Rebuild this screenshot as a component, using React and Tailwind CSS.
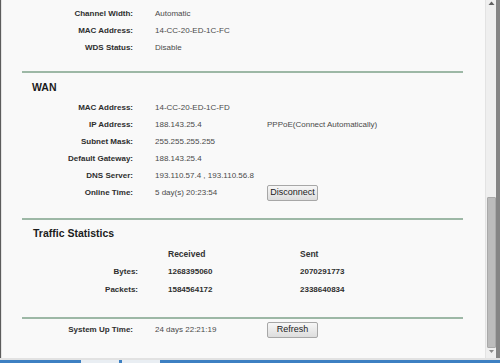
const wireless = [
  ["Channel Width:", "Automatic"],
  ["MAC Address:", "14-CC-20-ED-1C-FC"],
  ["WDS Status:", "Disable"],
];

const wan = [
  ["MAC Address:", "14-CC-20-ED-1C-FD", null],
  ["IP Address:", "188.143.25.4", "PPPoE(Connect Automatically)"],
  ["Subnet Mask:", "255.255.255.255", null],
  ["Default Gateway:", "188.143.25.4", null],
  ["DNS Server:", "193.110.57.4 , 193.110.56.8", null],
  ["Online Time:", "5 day(s) 20:23:54", "button"],
];

function Row({ label, value, extra }) {
  return (
    <div className="flex h-[17px] items-center">
      <div className="w-[131px] text-right text-[8px] font-bold text-[#2e2e2e]">{label}</div>
      <div className="ml-[22px] w-[112px] whitespace-nowrap text-[8px] text-[#4a4a4a]">{value}</div>
      {extra === "button" ? (
        <Button>Disconnect</Button>
      ) : extra ? (
        <div className="whitespace-nowrap text-[8px] text-[#4a4a4a]">{extra}</div>
      ) : null}
    </div>
  );
}

function Button({ children }) {
  return (
    <button className="flex h-[16px] w-[51px] items-center justify-center rounded-[2px] border border-[#a7a7a7] bg-gradient-to-b from-[#f7f7f7] to-[#dddddd] text-[9px] text-[#222]">
      {children}
    </button>
  );
}

function Divider({ className }) {
  return <div className={"ml-[20px] h-[2px] w-[441px] bg-[#9db8a6] " + className} />;
}

function TrafficRow({ label, a, b, head }) {
  return (
    <div className="flex h-[17.5px] items-center text-[8px] font-bold">
      <div className="w-[136px] text-right text-[#2e2e2e]">{label}</div>
      <div className={"ml-[30px] w-[132px] " + (head ? "text-[8.5px] text-[#333]" : "text-[#2e2e2e]")}>{a}</div>
      <div className={head ? "text-[8.5px] text-[#333]" : "text-[#2e2e2e]"}>{b}</div>
    </div>
  );
}

function Scrollbar() {
  return (
    <div className="flex w-[11px] flex-col border-l border-[#e3e3e3] bg-[#efefef]">
      <div className="flex h-[14px] justify-center pt-[1px]">
        <svg width="7" height="5" viewBox="0 0 7 5">
          <path d="M3.5 0.5 L6.5 4 L0.5 4 Z" fill="#606060" />
        </svg>
      </div>
      <div className="h-[183px]" />
      <div className="ml-[1px] h-[151px] w-[9px] rounded-[1px] border border-[#a9a9a9] bg-[#bcbcbc]" />
      <div className="flex-1" />
      <div className="flex h-[8px] justify-center">
        <svg width="5" height="3" viewBox="0 0 5 3">
          <path d="M0 0 L5 0 L2.5 3 Z" fill="#8a8a8a" />
        </svg>
      </div>
    </div>
  );
}

export default function App() {
  return (
    <div className="flex h-[363px] w-[500px] flex-col overflow-hidden bg-[#f9f9f9] font-['Liberation_Sans',Arial,sans-serif]">
      <div className="flex h-[358px]">
        <div className="w-px bg-[#5c5c5c]" />
        <div className="w-px bg-[#e4e4e4]" />
        <main className="flex-1 bg-[#f9f9f9] pt-[5px]">
          {wireless.map(([l, v]) => (
            <Row key={l} label={l} value={v} />
          ))}
          <Divider className="mt-[15px]" />

          <h2 className="ml-[30px] mt-[7px] flex h-[16px] items-center text-[10.5px] font-bold text-[#1c1c1c]">WAN</h2>
          <div className="mt-[3px]">
            {wan.map(([l, v, e]) => (
              <Row key={l} label={l} value={v} extra={e} />
            ))}
          </div>
          <Divider className="mt-[17px]" />

          <h2 className="ml-[31px] mt-[6px] flex h-[16px] items-center text-[10.5px] font-bold text-[#1c1c1c]">Traffic Statistics</h2>
          <div className="mt-[4px]">
            <TrafficRow head label="" a="Received" b="Sent" />
            <TrafficRow label="Bytes:" a="1268395060" b="2070291773" />
            <TrafficRow label="Packets:" a="1584564172" b="2338640834" />
          </div>
          <Divider className="mt-[18px]" />

          <div className="mt-[3px] flex h-[17px] items-center">
            <div className="w-[131px] text-right text-[8px] font-bold text-[#2e2e2e]">System Up Time:</div>
            <div className="ml-[22px] w-[112px] text-[8px] text-[#4a4a4a]">24 days 22:21:19</div>
            <Button>Refresh</Button>
          </div>
        </main>
        <Scrollbar />
        <div className="w-[4px] bg-[#858585]" />
      </div>
      <div className="h-[2px] bg-[#e2e2e2]" />
      <div className="flex h-[3px] bg-[#3d80c2]">
        <div className="w-[81px]" />
        <div className="w-[38px] bg-[#e9eef3]" />
        <div className="w-[3px]" />
        <div className="w-[38px] bg-[#e9eef3]" />
      </div>
    </div>
  );
}
